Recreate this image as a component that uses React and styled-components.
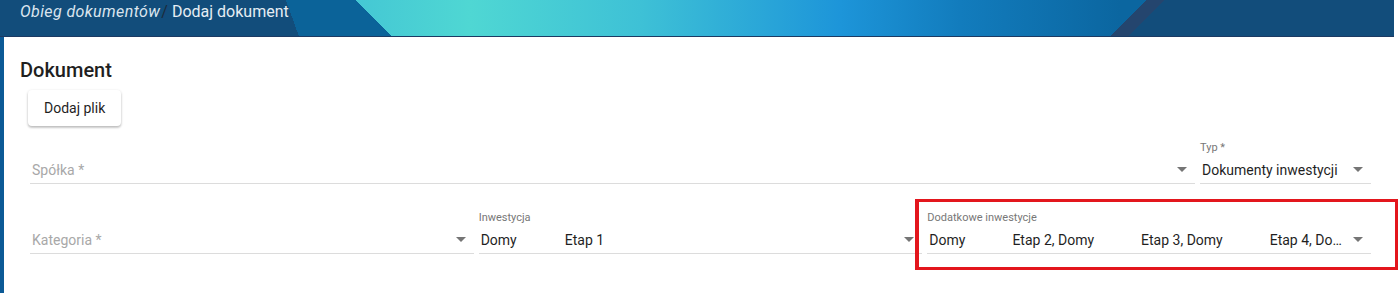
import React from 'react';
import styled, { createGlobalStyle } from 'styled-components';

const GlobalStyle = createGlobalStyle`
  html, body {
    margin: 0;
    padding: 0;
    background: #ffffff;
  }

  body {
    font-family: Roboto, "Liberation Sans", Arial, sans-serif;
    color: #212121;
  }
`;

const Shell = styled.div`
  display: flex;
  flex-direction: column;
  width: calc(100% - 5px);
  min-height: 100vh;
`;

const Header = styled.header`
  height: 36px;
  border-bottom: 1px solid #1c3a63;
  padding: 0 20px;
  display: flex;
  align-items: flex-start;
  background:
    linear-gradient(135deg, transparent 810.5px, #24456e 810.5px, #24456e 823.5px, #124d7b 823.5px),
    linear-gradient(70.1deg, #124d7b 281px, transparent 281px),
    linear-gradient(45deg, #0b6399 276.5px, transparent 276.5px),
    linear-gradient(to right, #45c8d4 360px, #4fd7d3 470px, #3ec1d6 640px, #1d95d9 840px, #127cbd 960px, #0b66a0 1120px);
`;

const Crumbs = styled.div`
  font-size: 16px;
  line-height: 24px;
  color: #e6edf4;
  white-space: nowrap;
`;

const CrumbLink = styled.span`
  font-style: italic;
  letter-spacing: 0.4px;
  color: #dbe5ef;
`;

const CrumbSep = styled.span`
  color: #1c2b3c;
  padding-left: 1px;
`;

const Body = styled.main`
  flex: 1;
  border-left: 4px solid #0c5a96;
  padding: 21px 23px 0 16px;
`;

const Title = styled.h2`
  margin: 0;
  font-size: 20px;
  line-height: 24px;
  font-weight: 500;
  color: #1f1f1f;
`;

const ButtonRow = styled.div`
  display: flex;
  padding: 8px 0 0 8px;
`;

const RaisedButton = styled.button`
  height: 36px;
  padding: 0 16px;
  border: none;
  border-radius: 4px;
  background: #ffffff;
  color: #1f1f1f;
  font-family: inherit;
  font-size: 14px;
  box-shadow: 0 1px 3px rgba(0, 0, 0, 0.2), 0 2px 2px rgba(0, 0, 0, 0.12);
  cursor: pointer;
`;

const Form = styled.div`
  display: flex;
  flex-direction: column;
  gap: 26px;
  padding: 14px 0 0 10px;
`;

const Row = styled.div`
  display: grid;
  grid-template-columns: ${props => props.cols};
  column-gap: 5px;
`;

const Field = styled.div`
  position: relative;
  display: flex;
  flex-direction: column;
  min-width: 0;

  ${props => props.marked && `
    &::after {
      content: '';
      position: absolute;
      top: -11px;
      bottom: -16px;
      left: -12px;
      right: -27px;
      border: 3px solid #e3161d;
      border-left-width: 4px;
      pointer-events: none;
    }
  `}
`;

const Label = styled.label`
  height: 16px;
  font-size: 11px;
  line-height: 16px;
  color: #777777;
  white-space: nowrap;
`;

const Control = styled.div`
  box-sizing: border-box;
  height: 28px;
  display: flex;
  align-items: center;
  border-bottom: 1px solid #dcdcdc;
`;

const Value = styled.div`
  flex: 1;
  min-width: 0;
  padding-left: 2px;
  font-size: 14px;
  color: ${props => (props.placeholder ? '#a8a8a8' : '#1f1f1f')};
  white-space: nowrap;
  overflow: hidden;
`;

const Hidden = styled.span`
  display: inline-block;
  width: ${props => props.w}px;
`;

const Caret = styled.span`
  flex: none;
  width: 0;
  height: 0;
  margin: 0 8px 0 3px;
  border-left: 5px solid transparent;
  border-right: 5px solid transparent;
  border-top: 5px solid #757575;
`;

const Select = ({ label, placeholder, marked, children }) => (
  <Field marked={marked}>
    <Label>{label}</Label>
    <Control>
      <Value placeholder={placeholder ? 1 : 0}>{placeholder || children}</Value>
      <Caret />
    </Control>
  </Field>
);

const App = () => (
  <>
    <GlobalStyle />
    <Shell>
      <Header>
        <Crumbs>
          <CrumbLink>Obieg dokumentów</CrumbLink>
          <CrumbSep>/</CrumbSep> Dodaj dokument
        </Crumbs>
      </Header>
      <Body>
        <Title>Dokument</Title>
        <ButtonRow>
          <RaisedButton>Dodaj plik</RaisedButton>
        </ButtonRow>
        <Form>
          <Row cols="1fr 171px">
            <Select placeholder="Spółka *" />
            <Select label="Typ *">Dokumenty inwestycji</Select>
          </Row>
          <Row cols="1fr 1fr 1fr">
            <Select placeholder="Kategoria *" />
            <Select label="Inwestycja">
              Domy<Hidden w={48} />Etap 1
            </Select>
            <Select label="Dodatkowe inwestycje" marked>
              Domy<Hidden w={47} />Etap 2, Domy<Hidden w={47} />Etap 3, Domy<Hidden w={47} />Etap 4, Do…
            </Select>
          </Row>
        </Form>
      </Body>
    </Shell>
  </>
);

export default App;
